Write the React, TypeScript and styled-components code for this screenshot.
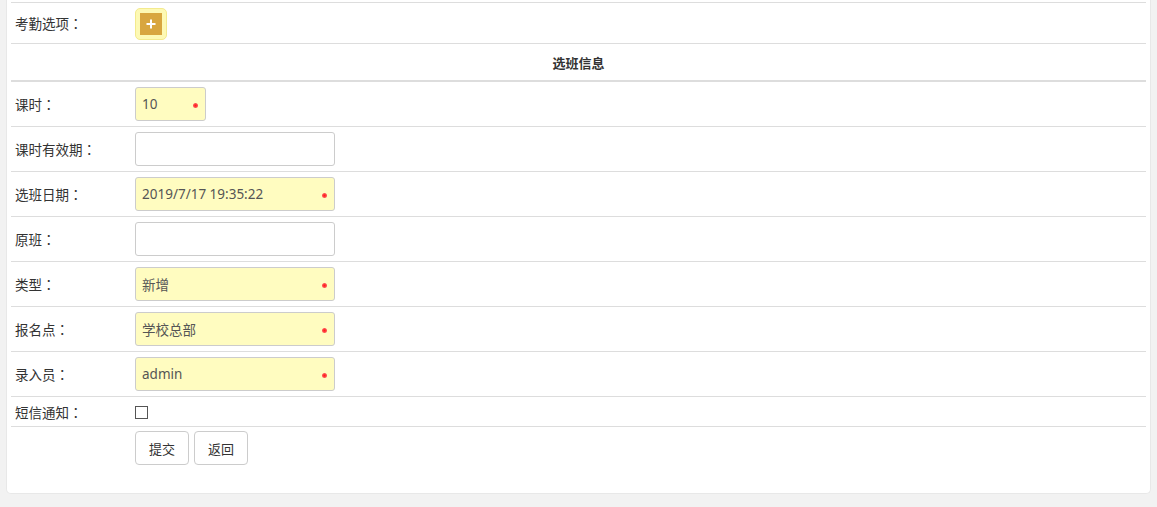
import React from "react";
import styled, { createGlobalStyle } from "styled-components";

const GlobalStyle = createGlobalStyle`
  html, body {
    margin: 0;
    padding: 0;
    background: #f2f2f2;
    font-family: "Noto Sans", "Noto Sans CJK SC", sans-serif;
    font-size: 13px;
    color: #333;
  }
`;

type Field = {
  label: string;
  value?: string;
  required?: boolean;
  size?: "small" | "wide";
};

const fields: Field[] = [
  { label: "课时", value: "10", required: true, size: "small" },
  { label: "课时有效期", value: "", size: "wide" },
  { label: "选班日期", value: "2019/7/17 19:35:22", required: true, size: "wide" },
  { label: "原班", value: "", size: "wide" },
  { label: "类型", value: "新增", required: true, size: "wide" },
  { label: "报名点", value: "学校总部", required: true, size: "wide" },
  { label: "录入员", value: "admin", required: true, size: "wide" },
];

const PlusIcon = () => (
  <svg width="12" height="12" viewBox="0 0 12 12">
    <path d="M6 1.5v9M1.5 6h9" stroke="#fff" strokeWidth="2" />
  </svg>
);

const FieldLabel = ({ text }: { text: string }) => (
  <Label>
    {text}
    <Colon>：</Colon>
  </Label>
);

const App = () => {
  return (
    <Page>
      <GlobalStyle />
      <Panel>
        <Row $height={40} $first>
          <FieldLabel text="考勤选项" />
          <Cell>
            <AddButton type="button">
              <AddInner>
                <PlusIcon />
              </AddInner>
            </AddButton>
          </Cell>
        </Row>
        <HeaderRow>选班信息</HeaderRow>
        {fields.map((f) => (
          <Row key={f.label} $height={44}>
            <FieldLabel text={f.label} />
            <Cell>
              <InputBox $required={f.required} $size={f.size}>
                {f.value}
                {f.required && <Star />}
              </InputBox>
            </Cell>
          </Row>
        ))}
        <Row $height={29}>
          <FieldLabel text="短信通知" />
          <Cell>
            <Checkbox />
          </Cell>
        </Row>
        <Actions>
          <Button type="button">提交</Button>
          <Button type="button">返回</Button>
        </Actions>
      </Panel>
    </Page>
  );
};

export default App;

const Page = styled.div`
  padding: 0 6px 14px 6px;
`;

const Panel = styled.div`
  background: #fff;
  border: 1px solid #e8e8e8;
  border-top: none;
  border-radius: 0 0 5px 5px;
  padding: 2px 4px 28px 4px;
`;

const Row = styled.div<{ $height: number; $first?: boolean }>`
  display: flex;
  align-items: center;
  height: ${(p) => p.$height}px;
  border-bottom: 1px solid #ddd;
  border-top: ${(p) => (p.$first ? "1px solid #ddd" : "none")};
`;

const HeaderRow = styled.div`
  height: 36px;
  display: flex;
  align-items: center;
  justify-content: center;
  font-weight: bold;
  border-bottom: 2px solid #ddd;
`;

const Label = styled.div`
  width: 120px;
  padding-left: 4px;
  flex-shrink: 0;
  color: #333;
  font-size: 13.5px;
`;

const Colon = styled.span`
  font-family: "Noto Sans CJK TC", sans-serif;
`;

const Cell = styled.div`
  display: flex;
  align-items: center;
  gap: 4px;
`;

const AddButton = styled.button`
  width: 32px;
  height: 32px;
  padding: 0;
  border: 1px solid #f3ea8e;
  border-radius: 5px;
  background: #fdf9b4;
  display: flex;
  align-items: center;
  justify-content: center;
  margin-top: 1px;
`;

const AddInner = styled.span`
  width: 22px;
  height: 22px;
  background: #d8a63f;
  display: flex;
  align-items: center;
  justify-content: center;
`;

const InputBox = styled.div<{ $required?: boolean; $size?: "small" | "wide" }>`
  position: relative;
  box-sizing: border-box;
  width: ${(p) => (p.$size === "small" ? "71px" : "200px")};
  height: 34px;
  padding: 0 6px;
  display: flex;
  align-items: center;
  border: 1px solid #ccc;
  border-radius: 3px;
  background: ${(p) => (p.$required ? "#fffcc0" : "#fff")};
  color: #555;
  font-size: 13.5px;
`;

const Star = styled.span`
  position: absolute;
  right: 7px;
  top: 15px;
  width: 5px;
  height: 5px;
  border-radius: 50%;
  background: radial-gradient(circle, #ff1a1a 0%, #ff5050 60%, #ffb0a0 100%);
`;

const Checkbox = styled.span`
  display: inline-block;
  width: 11px;
  height: 11px;
  border: 1px solid #555;
  margin-top: 1px;
`;

const Actions = styled.div`
  display: flex;
  gap: 5px;
  padding: 4px 0 0 124px;
`;

const Button = styled.button`
  width: 54px;
  height: 34px;
  padding: 0;
  background: #fff;
  border: 1px solid #ccc;
  border-radius: 4px;
  font-family: inherit;
  font-size: 13px;
  color: #333;
`;
